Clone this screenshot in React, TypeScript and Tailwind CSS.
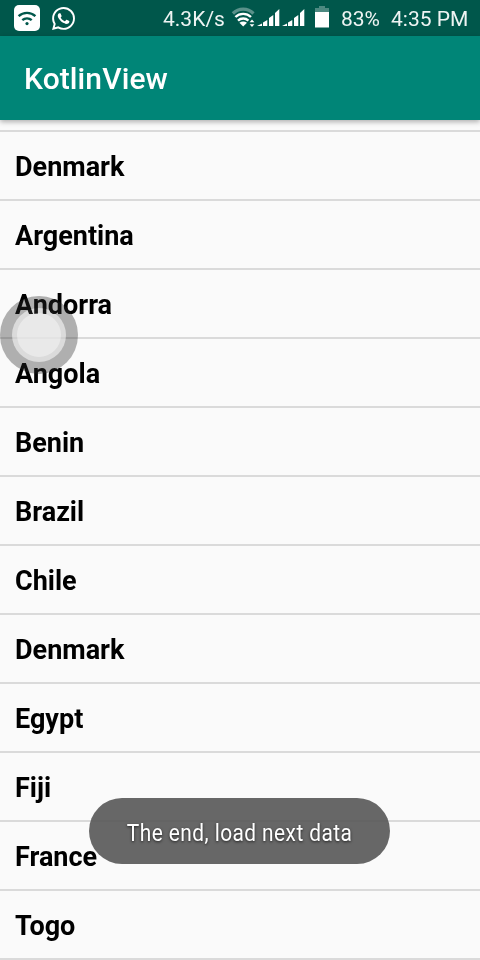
const countries = [
  'Denmark', 'Argentina', 'Andorra', 'Angola', 'Benin', 'Brazil',
  'Chile', 'Denmark', 'Egypt', 'Fiji', 'France', 'Togo',
];

function HotspotIcon() {
  return (
    <svg className="ml-[14px] h-[26px] w-[26px]" viewBox="0 0 26 26" fill="none">
      <rect width="26" height="26" rx="5" fill="#fff" />
      <path d="M4.6 11.2a12.2 12.2 0 0 1 16.8 0M8.3 15.2a7 7 0 0 1 9.4 0" stroke="#00574b" strokeWidth="2.4" />
      <circle cx="13" cy="18.6" r="1.6" fill="#00574b" />
    </svg>
  );
}

function WhatsAppIcon() {
  return (
    <svg className="ml-[12px] h-[23px] w-[23px]" viewBox="0 0 24 24" fill="#fff">
      <path d="M17.472 14.382c-.297-.149-1.758-.867-2.03-.967-.273-.099-.471-.148-.67.15-.197.297-.767.966-.94 1.164-.173.199-.347.223-.644.075-.297-.15-1.255-.463-2.39-1.475-.883-.788-1.48-1.761-1.653-2.059-.173-.297-.018-.458.13-.606.134-.133.298-.347.446-.52.149-.174.198-.298.298-.497.099-.198.05-.371-.025-.52-.075-.149-.669-1.612-.916-2.207-.242-.579-.487-.5-.669-.51-.173-.008-.371-.01-.57-.01-.198 0-.52.074-.792.372-.272.297-1.04 1.016-1.04 2.479 0 1.462 1.065 2.875 1.213 3.074.149.198 2.096 3.2 5.077 4.487.709.306 1.262.489 1.694.625.712.227 1.36.195 1.871.118.571-.085 1.758-.719 2.006-1.413.248-.694.248-1.289.173-1.413-.074-.124-.272-.198-.57-.347m-5.421 7.403h-.004a9.87 9.87 0 0 1-5.031-1.378l-.361-.214-3.741.982.998-3.648-.235-.374a9.86 9.86 0 0 1-1.51-5.26c.001-5.45 4.436-9.884 9.888-9.884a9.83 9.83 0 0 1 6.988 2.898 9.82 9.82 0 0 1 2.893 6.994c-.003 5.45-4.437 9.884-9.885 9.884m8.413-18.297A11.82 11.82 0 0 0 12.05 0C5.495 0 .16 5.335.157 11.892c0 2.096.547 4.142 1.588 5.945L.057 24l6.305-1.654a11.88 11.88 0 0 0 5.683 1.448h.005c6.554 0 11.89-5.335 11.893-11.893a11.82 11.82 0 0 0-3.48-8.413Z" />
    </svg>
  );
}

function SignalIcons() {
  return (
    <svg className="block h-[36px] w-[104px] shrink-0" viewBox="228 0 104 36" fill="none">
      <path d="M232.9 13.5a14.5 14.5 0 0 1 20.6 0" stroke="#5a918a" strokeWidth="3.2" />
      <path d="M235.4 17a11.3 11.3 0 0 1 15.6 0M238 20.6a7.5 7.5 0 0 1 10.4 0" stroke="#fff" strokeWidth="2.4" />
      <path d="M239.4 22.8q3.8-2.4 7.6 0l-3.8 3.6z" fill="#fff" />
      <path d="M249.6 22.2l2.4-2.7 2.4 2.7zM249.6 24.2l2.4 2.7 2.4-2.7z" fill="#fff" />
      <path d="M257 26l5-2.5v2.5zM263 22.5l4.3-2.5v6h-4.3zM269 18l4.3-3v11h-4.3zM275 13l4.3-4v17h-4.3z" fill="#fff" />
      <path d="M282 26l5-2.5v2.5zM288 22.5l4.3-2.5v6h-4.3zM294 18l4.3-3v11h-4.3zM300 13l4.3-4v17h-4.3z" fill="#fff" />
      <path d="M319 6h6v2h4v4h-14V8h4z" fill="#4d8981" />
      <path d="M315 12h14v15.5h-14z" fill="#fff" />
    </svg>
  );
}

export default function App() {
  return (
    <div className="relative flex h-[960px] w-[480px] flex-col overflow-hidden bg-[#fafafa] font-['Roboto',sans-serif]">
      <div className="flex h-[36px] shrink-0 items-center whitespace-pre bg-[#00574b] text-[21px] leading-[36px] text-[#eef4f3]">
        <HotspotIcon />
        <WhatsAppIcon />
        <div className="ml-auto flex items-center pr-[10px]">
          <span className="mr-[3px] pt-[2px] tracking-[0.05px]">4.3K/s</span>
          <SignalIcons />
          <span className="ml-[9px] w-[40px] pt-[2px]">83%</span>
          <span className="ml-[10px] w-[79px] pt-[2px]">4:35 PM</span>
        </div>
      </div>
      <header className="z-10 flex h-[84px] shrink-0 items-center bg-[#008577] pl-[24px] shadow-[0_2px_5px_rgba(0,0,0,0.3)]">
        <h1 className="pt-[1px] text-[30px] font-medium leading-[36px] tracking-[0.1px] text-white">KotlinView</h1>
      </header>
      <ul className="mt-[10px] shrink-0 border-t-2 border-[#dadada]">
        {countries.map((country, i) => (
          <li key={i} className="flex h-[69px] items-center border-b-2 border-[#dadada] pl-[15px] pt-[4px] text-[27px] font-bold text-black">
            {country}
          </li>
        ))}
      </ul>
      {/* Floating assistive button: each disc blends with the list beneath it */}
      <div className="absolute left-0 top-[296px] h-[78px] w-[78px] rounded-full bg-[#2a2a2a]/36" />
      <div className="absolute left-[12px] top-[308px] h-[54px] w-[54px] rounded-full bg-white/55 mix-blend-overlay" />
      <div className="absolute left-[17px] top-[313px] h-[44px] w-[44px] rounded-full bg-white/40" />
      <div className="absolute left-[89px] top-[798px] z-20 flex h-[66px] w-[301px] items-center justify-center rounded-full bg-[#565656]/90">
        <span className="ml-[1px] shrink-0 scale-x-[0.87] whitespace-nowrap pt-[3px] text-[24px] tracking-[0.5px] text-white [text-shadow:0_1px_3px_rgba(0,0,0,0.7)]">
          The end, load next data
        </span>
      </div>
    </div>
  );
}
